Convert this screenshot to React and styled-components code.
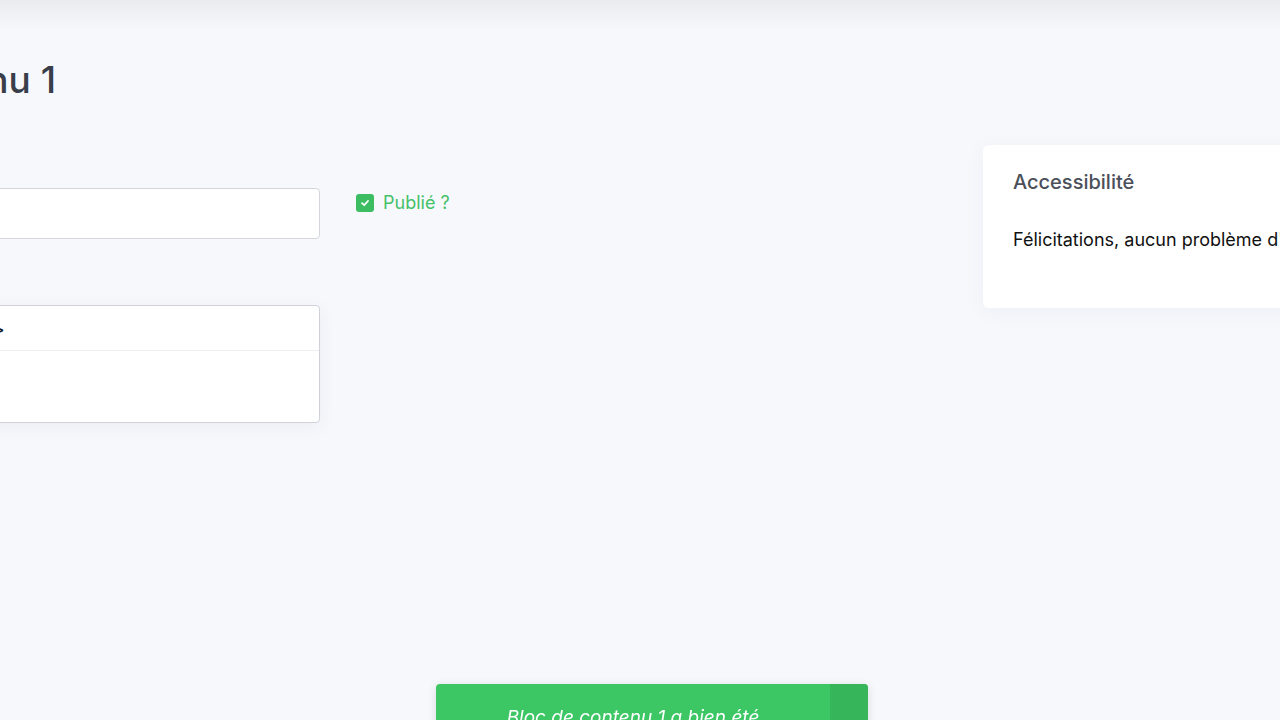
import React from 'react'
import styled, { createGlobalStyle } from 'styled-components'

const GlobalStyle = createGlobalStyle`
  html, body {
    margin: 0;
    padding: 0;
    background: #f7f8fc;
    overflow: hidden;
  }
  body {
    font-family: Inter, "Noto Sans", "Liberation Sans", sans-serif;
  }
`

const Page = styled.div`
  width: 1280px;
  height: 720px;
  overflow: hidden;
`

const TopBar = styled.div`
  height: 30px;
  background: linear-gradient(#eaebef, #f7f8fc);
`

const Layout = styled.div`
  display: flex;
  align-items: flex-start;
  width: 1703px;
  margin-left: -380px;
`

const Content = styled.div`
  flex: 1;
  padding-top: 28px;
`

const Title = styled.h1`
  width: 436px;
  margin: 0;
  text-align: right;
  white-space: nowrap;
  font-size: 37px;
  font-weight: 500;
  line-height: 44px;
  color: #3a3e4a;
`

const Row = styled.div`
  display: flex;
  align-items: flex-start;
  gap: 36px;
  margin-top: 54px;
`

const FormColumn = styled.div`
  width: 700px;
  display: flex;
  flex-direction: column;
`

const Label = styled.label`
  display: block;
  font-size: 16px;
  line-height: 20px;
  color: #4a4f5a;
  margin-bottom: 12px;
`

const Field = styled.div`
  margin-bottom: ${p => p.$gap || 0}px;
`

const TextInput = styled.input`
  box-sizing: border-box;
  display: block;
  width: 100%;
  height: 51px;
  border: 1px solid #d4d6dc;
  border-radius: 4px;
  background: #fff;
  outline: none;
`

const Editor = styled.div`
  box-sizing: border-box;
  height: 118px;
  border: 1px solid #d0d2d8;
  border-radius: 4px;
  background: #fff;
  box-shadow: 0 4px 18px rgba(60, 70, 110, 0.06);
`

const Toolbar = styled.div`
  display: flex;
  align-items: center;
  justify-content: flex-end;
  gap: 18px;
  height: 44px;
  padding-right: 315px;
  border-bottom: 1px solid #eceef1;
  font-size: 13px;
  color: #12182a;
`

const ToolButton = styled.span`
  font-weight: 700;
  line-height: 1;
  padding-top: 2px;
`

const CheckRow = styled.label`
  display: flex;
  align-items: center;
  gap: 9px;
  margin-top: 36px;
  font-size: 18px;
  line-height: 22px;
  color: #45c16a;
`

const Box = styled.span`
  width: 18px;
  height: 18px;
  border-radius: 3px;
  background: #3dbd62;
  display: flex;
  align-items: center;
  justify-content: center;
`

const Aside = styled.aside`
  width: 340px;
  flex-shrink: 0;
  margin-top: 115px;
`

const Card = styled.div`
  background: #fff;
  border-radius: 6px;
  padding: 25px 30px 56px;
  box-shadow: 0 4px 20px rgba(60, 70, 110, 0.05);
  white-space: nowrap;
`

const CardTitle = styled.h2`
  margin: 0 0 34px;
  font-size: 20px;
  line-height: 24px;
  font-weight: 500;
  color: #4b4f5a;
`

const CardText = styled.p`
  margin: 0;
  font-size: 18px;
  line-height: 24px;
  color: #111;
`

const Toast = styled.div`
  position: fixed;
  left: 436px;
  top: 684px;
  width: 432px;
  height: 90px;
  display: flex;
  border-radius: 4px;
  overflow: hidden;
  background: #3cc764;
  box-shadow: 0 2px 10px rgba(0, 0, 0, 0.12);
`

const ToastText = styled.div`
  flex: 1;
  padding-top: 21px;
  text-align: center;
  font-size: 19px;
  font-style: italic;
  color: #fff;
  line-height: 26px;
`

const ToastClose = styled.div`
  width: 38px;
  background: #37b55b;
`

export default function App() {
  return (
    <Page>
      <GlobalStyle />
      <TopBar />
      <Layout>
        <Content>
          <Title>Bloc de contenu 1</Title>
          <Row>
            <FormColumn>
              <Field $gap={34}>
                <Label>Titre</Label>
                <TextInput defaultValue="" />
              </Field>
              <Field>
                <Label>Contenu</Label>
                <Editor>
                  <Toolbar>
                    <ToolButton>B</ToolButton>
                    <ToolButton>I</ToolButton>
                    <ToolButton>&lt;/&gt;</ToolButton>
                  </Toolbar>
                </Editor>
              </Field>
            </FormColumn>
            <CheckRow>
              <Box>
                <svg width="10" height="10" viewBox="0 0 10 10">
                  <path d="M2 5.2 L4.2 7.2 L8 3" fill="none" stroke="#fff" strokeWidth="1.8" strokeLinecap="round" strokeLinejoin="round" />
                </svg>
              </Box>
              Publié ?
            </CheckRow>
          </Row>
        </Content>
        <Aside>
          <Card>
            <CardTitle>Accessibilité</CardTitle>
            <CardText>Félicitations, aucun problème d'accessibilité détecté.</CardText>
          </Card>
        </Aside>
      </Layout>
      <Toast>
        <ToastText>
          Bloc de contenu 1 a bien été<br />enregistré.
        </ToastText>
        <ToastClose />
      </Toast>
    </Page>
  )
}
